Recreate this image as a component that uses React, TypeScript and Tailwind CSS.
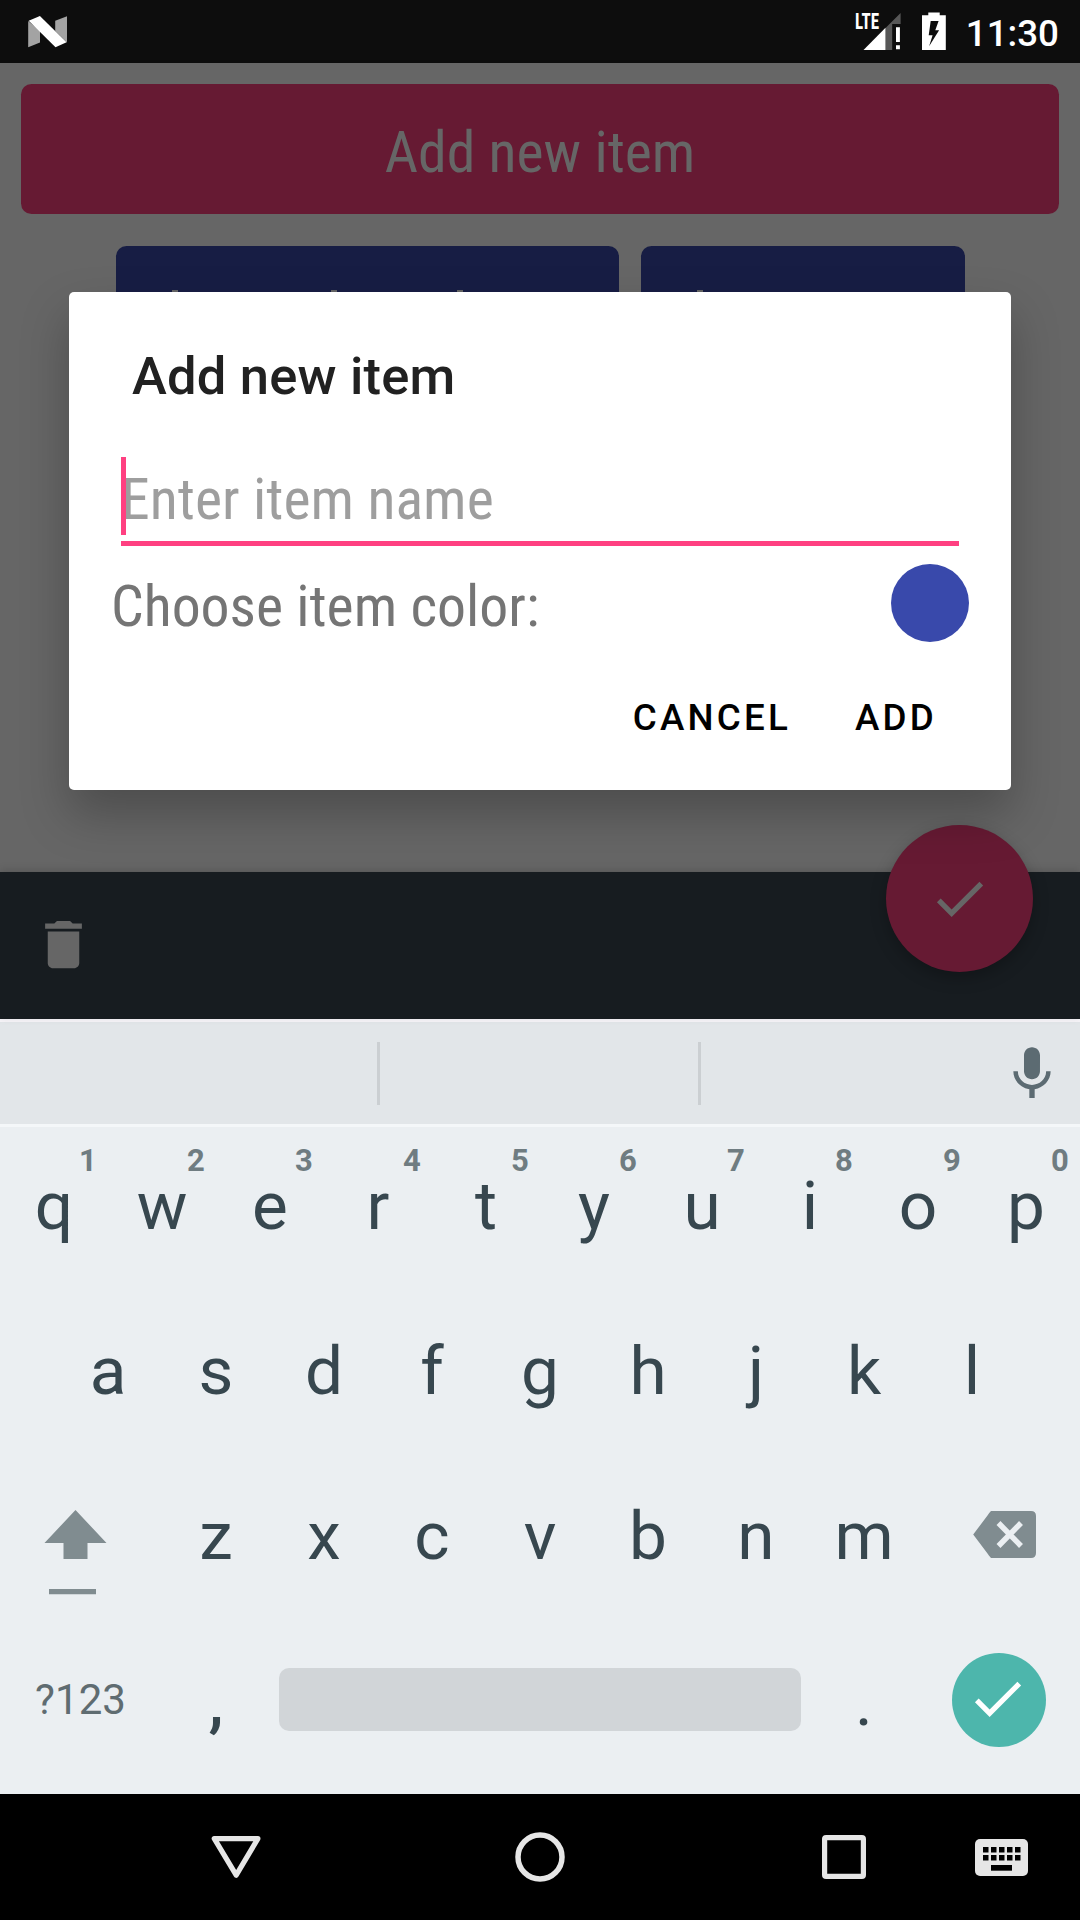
import React from "react";

const KEY_ROW_1 = ["q", "w", "e", "r", "t", "y", "u", "i", "o", "p"];
const KEY_ROW_2 = ["a", "s", "d", "f", "g", "h", "j", "k", "l"];
const KEY_ROW_3 = ["z", "x", "c", "v", "b", "n", "m"];

function CheckIcon({ className }: { className?: string }) {
  return (
    <svg viewBox="0 0 24 24" className={className} fill="currentColor">
      <path d="M9 16.17 4.83 12l-1.42 1.41L9 19 21 7l-1.41-1.41z" />
    </svg>
  );
}

function StatusBar() {
  return (
    <header className="flex h-[63px] shrink-0 items-start bg-[#0d0d0d] text-white">
      <svg className="mt-4 ml-7 h-8 w-10" viewBox="28 16 40 32">
        <path d="M28.2 21 40 31v11.5l-11.8 4.8z" fill="#a3a3a3" />
        <path d="M67 16.2v26.3L55.2 31V20.8z" fill="#a3a3a3" />
        <path d="M28.7 20.8 39.9 16 66.6 42.2 55.5 47.2z" fill="#fff" />
      </svg>
      <svg className="mt-1 ml-auto h-12 w-[50px] overflow-visible" viewBox="853 4 50 48">
        <path d="M900.6 13 885.5 28v22h6.7V24h8.4z" fill="#575757" />
        <path d="M885.5 27.8v22.2h-22z" fill="#fff" />
        <path d="M896 27.3h3.9V42H896zM896 45.3h3.9v4H896z" fill="#fff" />
        <text x="855" y="29.2" fontSize="21.8" fontWeight="700" fill="#fff" textLength="24" lengthAdjust="spacingAndGlyphs" className="[font-family:'Roboto_Condensed',Roboto] [font-stretch:75%]">
          LTE
        </text>
      </svg>
      <svg className="mt-3 ml-[19px] h-10 w-6" viewBox="922 12 24 40">
        <path fillRule="evenodd" fill="#fff" d="M928.3 12.5h11.4v2.8h6.1V50h-23.8V15.3h6.3zM930.7 21l-2 14.3h3.9l-3.5 11 10-16h-3.8l3.3-9.3z" />
      </svg>
      <span className="mt-2.5 mr-[21px] ml-[20px] text-[36.75px] leading-[48px] font-medium">11:30</span>
    </header>
  );
}

function Backdrop() {
  return (
    <main className="h-[809px] px-[21px] pt-[21px]">
      <div className="flex h-[130px] items-center justify-center rounded-[10.5px] bg-[#661a33] pt-1.5 text-[57.75px] text-[#666]">
        <span className="[font-family:'Roboto_Condensed',Roboto] [font-stretch:75%]">Add new item</span>
      </div>
      <div className="mt-8 flex justify-center gap-[22px]">
        <div className="h-[130px] w-[503px] rounded-[10.5px] bg-[#171d44] pt-11">
          <div className="flex h-2 pl-14 *:h-full *:w-1.5 *:bg-[#666]">
            <i />
            <i className="ml-[153px]" />
            <i className="ml-[120px]" />
          </div>
        </div>
        <div className="h-[130px] w-[324px] rounded-[10.5px] bg-[#171d44] pt-11">
          <div className="ml-14 h-2 w-1.5 bg-[#666]" />
        </div>
      </div>
    </main>
  );
}

function BottomBar() {
  return (
    <div className="relative h-[147px] bg-[#171c20] shadow-[0_-2px_8px_rgba(0,0,0,0.15)]">
      <svg className="absolute top-[41px] left-8 size-[63px]" viewBox="0 0 24 24" fill="#666">
        <path d="M6 19c0 1.1.9 2 2 2h8c1.1 0 2-.9 2-2V7H6v12zM19 4h-3.5l-1-1h-5l-1 1H5v2h14V4z" />
      </svg>
      <div className="absolute top-[-47px] right-[47px] flex size-[147px] items-center justify-center rounded-full bg-[#661a33] text-[#666] shadow-[0_6px_16px_rgba(0,0,0,0.25)]">
        <CheckIcon className="size-[63px]" />
      </div>
    </div>
  );
}

function Dialog() {
  return (
    <section className="absolute top-[292px] left-[69px] z-10 flex h-[498px] w-[942px] flex-col rounded-[5px] bg-white shadow-[0_24px_48px_rgba(0,0,0,0.25)]">
      <h2 className="mt-[53px] ml-[63px] text-[52.5px] leading-[62px] font-medium tracking-[0.2px] text-[#212121]">Add new item</h2>
      <div className="relative mt-[50px] ml-[52px] flex h-[89px] w-[838px] flex-col justify-between border-b-[5px] border-[#ff4081]">
        <span className="pt-2 text-[57.75px] leading-[68px] tracking-[0.05px] text-[#9e9e9e] [font-family:'Roboto_Condensed',Roboto] [font-stretch:75%]">Enter item name</span>
        <i className="absolute top-0 left-0 h-[78px] w-[5px] bg-[#ff4081]" />
      </div>
      <div className="mt-[18px] mr-[42px] ml-[42px] flex h-[78px] items-center justify-between">
        <span className="pt-[5px] text-[57.75px] leading-[68px] text-[#757575] [font-family:'Roboto_Condensed',Roboto] [font-stretch:75%]">Choose item color:</span>
        <span className="size-[78px] rounded-full bg-[#3949ab]" />
      </div>
      <div className="mt-[54px] mr-[74px] flex justify-end gap-[64px] text-[36.75px] leading-[44px] font-medium tracking-[3.2px] text-black">
        <span>CANCEL</span>
        <span>ADD</span>
      </div>
    </section>
  );
}

function Key({ label, hint }: { label: string; hint?: string }) {
  return (
    <div className="relative w-[108px] text-center text-[67.5px] leading-[80px] text-[#37474f]">
      {label}
      {hint && <span className="absolute top-[-23px] left-[68px] w-10 text-center text-[31px] leading-9 font-bold text-[#6f7c81]">{hint}</span>}
    </div>
  );
}

function Keyboard() {
  return (
    <section className="flex h-[775px] flex-col bg-[#ebeff2]">
      <div className="flex h-[108px] items-center border-t-[3px] border-b-[3px] border-t-[#f7f5f9] border-b-[#f4f7f9] bg-[#e2e6e9]">
        <i className="ml-[377px] h-[63px] w-[3px] bg-[#cbcfd2]" />
        <i className="ml-[318px] h-[63px] w-[3px] bg-[#cbcfd2]" />
        <svg className="mt-0.5 mr-4 ml-auto size-16" viewBox="0 0 24 24" fill="#5c6b72">
          <path d="M12 14c1.66 0 2.99-1.34 2.99-3L15 5c0-1.66-1.34-3-3-3S9 3.34 9 5v6c0 1.66 1.34 3 3 3zm5.3-3c0 3-2.54 5.1-5.3 5.1S6.7 14 6.7 11H5c0 3.41 2.72 6.23 6 6.72V21h2v-3.28c3.28-.48 6-3.3 6-6.72h-1.7z" />
        </svg>
      </div>
      <div className="mt-[39px] flex h-[165px]">
        {KEY_ROW_1.map((k, i) => (
          <Key key={k} label={k} hint={String((i + 1) % 10)} />
        ))}
      </div>
      <div className="flex h-[165px] justify-center">
        {KEY_ROW_2.map((k) => (
          <Key key={k} label={k} />
        ))}
      </div>
      <div className="flex h-[165px]">
        <svg className="mt-[11px] w-[162px] shrink-0" height="100" viewBox="0 1507 162 100" fill="#808c90">
          <path d="M75.5 1510 44.5 1543h19v16h24v-16h19zM49 1589h47v5.3H49z" />
        </svg>
        {KEY_ROW_3.map((k) => (
          <Key key={k} label={k} />
        ))}
        <svg className="mt-[11px] w-[162px] shrink-0" height="100" viewBox="918 1507 162 100">
          <path d="M991 1511h40q5 0 5 5v37q0 5-5 5h-40q-2.5-3-3.5-4.5l-14.3-19 14.3-19q1-2 3.5-4.5z" fill="#808c90" />
          <path d="M998.5 1523l22.5 23M1021 1523l-22.5 23" stroke="#ebeff2" strokeWidth="5.5" />
        </svg>
      </div>
      <div className="-mt-0.5 flex h-[81px] items-center">
        <span className="w-[162px] pl-[35px] text-[42px] tracking-[0.1px] text-[#5f6c71]">?123</span>
        <span className="w-[108px] pt-1 text-center text-[67.5px] leading-[80px] font-medium text-[#37474f]">,</span>
        <span className="ml-[9px] h-[63px] w-[522px] rounded-[10px] bg-[#d1d5d8]" />
        <span className="ml-[9px] w-[108px] pt-1 text-center text-[67.5px] leading-[80px] text-[#37474f]">.</span>
        <span className="ml-[34px] flex size-[94px] items-center justify-center rounded-full bg-[#4db6ac] pr-[3px] pb-[2px] text-white">
          <CheckIcon className="size-[63px]" />
        </span>
      </div>
    </section>
  );
}

function NavBar() {
  return (
    <nav className="flex h-[126px] items-center bg-black">
      <svg className="ml-[204px] h-16 w-16" viewBox="204 1825 64 64" fill="none" stroke="#e6e6e6" strokeWidth="5.2" strokeLinejoin="round">
        <path d="M214.3 1838.6h43.6l-21.7 36.6z" />
      </svg>
      <svg className="ml-60 h-16 w-16" viewBox="508 1825 64 64" fill="none" stroke="#e6e6e6" strokeWidth="5.5">
        <circle cx="540" cy="1857" r="22" />
      </svg>
      <svg className="ml-60 h-16 w-16" viewBox="812 1825 64 64" fill="none" stroke="#e6e6e6" strokeWidth="5.2">
        <rect x="824.6" y="1837.6" width="38.8" height="38.8" rx="1.5" />
      </svg>
      <svg className="ml-[93px] h-16 w-16" viewBox="969 1825 64 64">
        <rect x="975" y="1839" width="53" height="37" rx="5" fill="#e6e6e6" />
        {[983, 991, 999, 1007, 1015].map((x) => (
          <path key={x} d={`M${x} 1847h5.5v5.5h-5.5zM${x} 1855h5.5v5.5h-5.5z`} />
        ))}
        <path d="M991 1865h21v5.7h-21z" />
      </svg>
    </nav>
  );
}

export default function App() {
  return (
    <div className="relative flex h-[1920px] w-[1080px] flex-col overflow-hidden bg-[#666] [font-family:Roboto,sans-serif]">
      <StatusBar />
      <Backdrop />
      <BottomBar />
      <Keyboard />
      <NavBar />
      <Dialog />
    </div>
  );
}
